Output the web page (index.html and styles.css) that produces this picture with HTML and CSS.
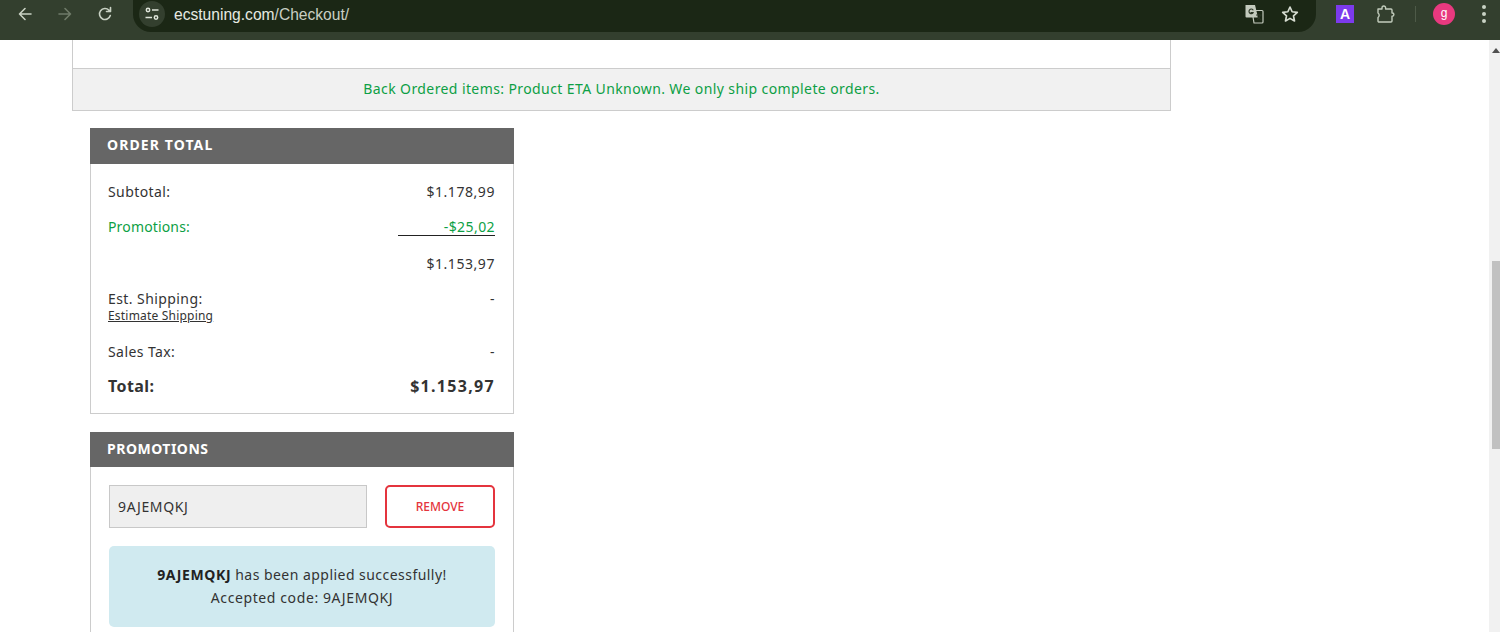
FILE: index.html
```html
<!DOCTYPE html>
<html lang="en">
<head>
<meta charset="utf-8">
<title>Checkout</title>
<link rel="stylesheet" href="styles.css">
</head>
<body>
<header class="chrome">
  <div class="nav">
    <svg class="ic back" viewBox="0 0 16 16"><path d="M14 8H2.500M8 2.500 2.500 8 8 13.500"/></svg>
    <svg class="ic fwd" viewBox="0 0 16 16"><path d="M2 8h11.500M8 2.500 13.500 8 8 13.500"/></svg>
    <svg class="ic reload" viewBox="0 0 16 16"><path d="M13.300 9.500A5.500 5.500 0 1 1 12 4.200L13.500 5.500M13.500 1.500v4h-4"/></svg>
  </div>
  <div class="omni">
    <span class="tune"><svg viewBox="0 0 16 16"><circle cx="4" cy="4" r="1.700"/><path d="M8 4h6.500M1.500 11.500H8"/><circle cx="12" cy="11.500" r="1.700"/></svg></span>
    <span class="url"><b>ecstuning.com</b>/Checkout/</span>
    <svg class="ic translate" viewBox="0 0 20 20"><path class="back-doc" d="M8 6.500h10a1 1 0 0 1 1 1V18a1 1 0 0 1-1 1H10z"/><path class="front-doc" d="M1.500 1h9.500l3 12.500H2.500a1 1 0 0 1-1-1z"/><path class="dark" d="M9 5.800a2.300 2.300 0 1 0 .3 2.700H7M12.500 11h5M15 10v1M16.500 11c-.4 2-1.500 3.500-3 4.500M13.800 13c.7 1.200 1.800 2 3 2.500"/></svg>
    <svg class="ic star" viewBox="0 0 16 16"><path d="M8 1.800 9.900 6l4.600.5-3.400 3.100.9 4.600L8 11.900l-4 2.300.9-4.600L1.500 6.500 6.100 6z"/></svg>
  </div>
  <div class="tools">
    <span class="ext-a">A</span>
    <svg class="ic puzzle" viewBox="0 0 20 20"><path d="M3 5h4V3.800a1.800 1.800 0 0 1 3.600 0V5H16a1 1 0 0 1 1 1v3h.3a1.600 1.600 0 0 1 0 3.200H17V17a1 1 0 0 1-1 1H4a1 1 0 0 1-1-1v-3.500a3 3 0 0 0 1.200-2.200A3 3 0 0 0 3 9V5z"/></svg>
    <span class="sep"></span>
    <span class="avatar">g</span>
    <span class="dots"><i></i><i></i><i></i></span>
  </div>
</header>
<div class="viewport">
  <main class="page">
    <section class="cart">
      <div class="cart-body"></div>
      <p class="cart-note">Back Ordered items: Product ETA Unknown. We only ship complete orders.</p>
    </section>
    <section class="card">
      <h2 class="card-head order-head">ORDER TOTAL</h2>
      <div class="card-body totals">
        <div class="row r-sub"><span>Subtotal:</span><span class="amt">$1.178,99</span></div>
        <div class="row r-promo"><span class="promo-label">Promotions:</span><span class="ruled">-$25,02</span></div>
        <div class="row r-net"><span></span><span class="amt">$1.153,97</span></div>
        <div class="row r-ship"><span>Est. Shipping:<a class="est" href="#">Estimate Shipping</a></span><span>-</span></div>
        <div class="row r-tax"><span>Sales Tax:</span><span>-</span></div>
        <div class="row r-total"><span>Total:</span><span class="grand">$1.153,97</span></div>
      </div>
    </section>
    <section class="card">
      <h2 class="card-head promo-head">PROMOTIONS</h2>
      <div class="card-body promo">
        <div class="promo-form">
          <input class="code" value="9AJEMQKJ" readonly>
          <button class="remove" type="button">REMOVE</button>
        </div>
        <div class="notice"><p><b>9AJEMQKJ</b> has been applied successfully!</p><p class="accepted">Accepted code: 9AJEMQKJ</p></div>
      </div>
    </section>
  </main>
  <aside class="scrollbar">
    <span class="arrow"></span>
    <span class="thumb"></span>
  </aside>
</div>
</body>
</html>
```
FILE: styles.css
```css
* { box-sizing: border-box; }
html, body { margin: 0; height: 632px; overflow: hidden; }
body { font-family: "Noto Sans", sans-serif; font-size: 14px; letter-spacing: .42px; color: #333; background: #fff; }
p, h2 { margin: 0; }

.chrome { height: 40px; background: #333f2e; display: flex; align-items: flex-start; letter-spacing: 0; }
.nav { width: 133px; height: 32px; display: flex; align-items: center; padding-left: 17px; flex: none; }
.ic { fill: none; stroke-width: 1.6; stroke-linecap: round; stroke-linejoin: round; flex: none; }
.back { width: 16px; height: 16px; stroke: #c9d2c4; margin-top: -4px; }
.fwd { width: 16px; height: 16px; stroke: #6f7b69; margin: -4px 0 0 24px; }
.reload { width: 16px; height: 16px; stroke: #c9d2c4; margin: -4px 0 0 24px; }
.omni { width: 1183px; height: 32px; background: #1b2715; border-radius: 0 0 18px 18px; display: flex; align-items: center; padding: 0 17px 4px 6px; flex: none; }
.tune { width: 26px; height: 26px; border-radius: 50%; background: #333f2e; display: flex; align-items: center; justify-content: center; flex: none; }
.tune svg { width: 16px; height: 16px; fill: none; stroke: #dfe5da; stroke-width: 1.500; }
.url { margin: 1px 0 0 9px; font-family: "Liberation Sans", sans-serif; font-size: 15.6px; color: #c9cfc4; flex: 1; }
.url b { font-weight: 400; color: #e6eae2; }
.translate { width: 20px; height: 20px; }
.translate .back-doc { fill: #1b2715; stroke: #c3cabd; stroke-width: 1.200; }
.translate .front-doc { fill: #c3cabd; stroke: none; }
.translate .dark { stroke: #2a3424; stroke-width: 1.100; }
.star { width: 18px; height: 18px; stroke: #d5dbd0; stroke-width: 1.500; margin-left: 17px; }
.tools { height: 32px; display: flex; align-items: center; flex: 1; padding: 0 0 4px 20px; }
.ext-a { width: 18px; height: 18px; background: #7c3aed; color: #fff; font: 700 14px/18px "Liberation Sans", sans-serif; text-align: center; flex: none; }
.puzzle { width: 20px; height: 20px; stroke: #c3cdbd; stroke-width: 1.400; margin-left: 21px; }
.sep { width: 1px; height: 16px; background: #4e5a48; margin-left: 20px; flex: none; }
.avatar { width: 22px; height: 22px; border-radius: 50%; background: #e8397f; color: #fff; font: 400 12px/20px "Liberation Sans", sans-serif; text-align: center; margin-left: 17px; flex: none; }
.dots { display: flex; flex-direction: column; gap: 3px; margin-left: 27px; flex: none; }
.dots i { width: 4px; height: 4px; border-radius: 50%; background: #c9d2c4; }

.viewport { height: 592px; display: flex; overflow: hidden; }
.page { flex: 1; min-width: 0; padding-left: 72px; }
.scrollbar { width: 11px; background: #f1f1f1; display: flex; flex-direction: column; align-items: flex-end; flex: none; }
.arrow { width: 0; height: 0; border: 4px solid transparent; border-top: 0; border-bottom: 5px solid #505050; margin: 8px 0 0; }
.thumb { width: 8px; height: 188px; background: #c1c1c1; margin-top: 208px; }

.cart { width: 1099px; border: 1px solid #ccc; border-top: 0; }
.cart-body { height: 28px; }
.cart-note { height: 42px; border-top: 1px solid #ccc; background: #f1f1f1; color: #0d9f45; text-align: center; line-height: 39px; letter-spacing: .4px; }

.card { width: 424px; margin: 18px 0 0 18px; }
.cart + .card { margin-top: 17px; }
.card-head { height: 36px; background: #666; color: #fff; font-size: 14px; font-weight: 700; line-height: 34px; padding-left: 17px; }
.order-head { letter-spacing: 1.100px; }
.promo-head { height: 35px; letter-spacing: .5px; }
.card-body { border: 1px solid #ccc; border-top: 0; padding: 0 18px 0 17px; }
.totals { height: 250px; padding-top: 11px; }
.row { display: flex; justify-content: space-between; line-height: 34px; }
.amt { letter-spacing: .56px; }
.r-sub { height: 34px; }
.r-promo { color: #0d9f45; height: 36px; line-height: 36px; }
.promo-label { letter-spacing: .15px; }
.ruled { display: block; width: 97px; text-align: right; height: 27px; line-height: 36px; border-bottom: 1px solid #222; }
.r-net { height: 37px; line-height: 37px; }
.r-ship { height: 53px; }
.est { display: block; font-size: 12px; line-height: 13px; color: #333; margin-top: -7px; letter-spacing: .2px; }
.r-tax { height: 35px; }
.r-total { font-size: 16px; font-weight: 700; line-height: 32px; }
.grand { letter-spacing: 1.300px; }
.promo { padding: 18px 18px 0 18px; height: 170px; }
.promo-form { display: flex; justify-content: space-between; }
.code { width: 258px; height: 43px; background: #efefef; border: 1px solid #c8c8c8; padding: 0 8px; font: 14px "Noto Sans", sans-serif; letter-spacing: .65px; color: #333; outline: 0; }
.remove { width: 110px; height: 43px; background: #fff; border: 2px solid #e4343d; border-radius: 5px; color: #e4343d; font: 500 12px "Noto Sans", sans-serif; padding: 0; }
.notice { margin-top: 18px; height: 81px; background: #d0eaf0; border-radius: 5px; text-align: center; padding-top: 17px; line-height: 23px; letter-spacing: .46px; color: #333; }
.notice b { color: #222; letter-spacing: .6px; }
.accepted { letter-spacing: .6px; }
```
